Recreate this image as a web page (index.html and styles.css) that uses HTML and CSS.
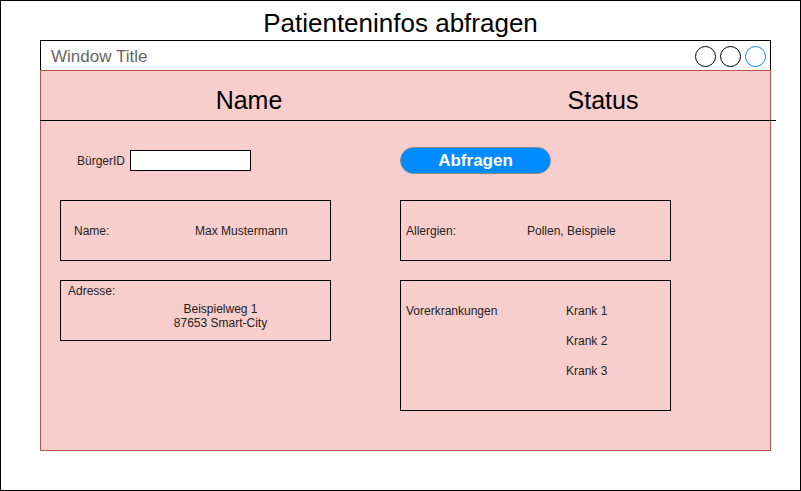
FILE: index.html
```html
<!DOCTYPE html>
<html lang="de">
<head>
<meta charset="utf-8">
<title>Patienteninfos abfragen</title>
<link rel="stylesheet" href="styles.css">
</head>
<body>
<div class="frame">
  <div class="page-title">Patienteninfos abfragen</div>
  <div class="window">
    <div class="titlebar">
      <span class="win-title">Window Title</span>
      <div class="win-controls">
        <span class="ctrl"></span>
        <span class="ctrl"></span>
        <span class="ctrl ctrl-blue"></span>
      </div>
    </div>
    <div class="win-body">
      <div class="col-heads">
        <div class="col-head">Name</div>
        <div class="col-head">Status</div>
      </div>
      <div class="divider"></div>
      <div class="content">
        <div class="search">
          <label class="search-label" for="bid">BürgerID</label>
          <input id="bid" class="search-input" type="text">
        </div>
        <div class="action">
          <button class="btn" type="button">Abfragen</button>
        </div>
        <div class="box box-name">
          <span class="lbl lbl-name">Name:</span>
          <span class="val">Max Mustermann</span>
        </div>
        <div class="box box-allergy">
          <span class="lbl lbl-allergy">Allergien:</span>
          <span class="val">Pollen, Beispiele</span>
        </div>
        <div class="box box-address">
          <div class="addr-label">Adresse:</div>
          <div class="addr">
            <div>Beispielweg 1</div>
            <div>87653 Smart-City</div>
          </div>
        </div>
        <div class="box box-history">
          <span class="hist-label">Vorerkrankungen</span>
          <div class="hist-list">
            <span>Krank 1</span>
            <span>Krank 2</span>
            <span>Krank 3</span>
          </div>
        </div>
      </div>
    </div>
  </div>
</div>
</body>
</html>
```

FILE: styles.css
```css
* {
  box-sizing: border-box;
}

html, body {
  margin: 0;
  padding: 0;
  background: #fff;
}

body {
  font-family: "Liberation Sans", Arial, Helvetica, sans-serif;
  color: #222;
}

.frame {
  width: 801px;
  height: 491px;
  border: 1px solid #000;
  overflow: hidden;
}

.page-title {
  height: 39px;
  padding-top: 7px;
  font-size: 26px;
  line-height: 30px;
  text-align: center;
  color: #000;
}

.window {
  margin-left: 39px;
  width: 731px;
}

.titlebar {
  height: 30px;
  border: 1px solid #000;
  border-bottom: none;
  display: flex;
  align-items: center;
  justify-content: space-between;
  padding: 0 4px 0 10px;
  background: #fff;
}

.win-title {
  align-self: flex-start;
  margin-top: 6px;
  font-size: 17px;
  line-height: 19px;
  color: #666;
}

.win-controls {
  display: flex;
  gap: 4px;
  margin-top: 1px;
}

.ctrl {
  width: 21px;
  height: 21px;
  border: 1px solid #000;
  border-radius: 50%;
  background: #fff;
}

.ctrl-blue {
  border-color: #008cff;
}

.win-body {
  height: 381px;
  border: 1px solid #b85450;
  background: #f8cecc;
}

.col-heads {
  display: grid;
  grid-template-columns: 416px 292px;
  height: 49px;
  padding-top: 15px;
}

.col-head {
  font-size: 25px;
  line-height: 29px;
  text-align: center;
  color: #000;
}

.divider {
  width: 736px;
  height: 1px;
  margin-left: -1px;
  background: #000;
}

.content {
  display: grid;
  grid-template-columns: 271px 271px;
  column-gap: 69px;
  row-gap: 19px;
  align-items: start;
  padding: 26px 0 0 19px;
  font-size: 12px;
}

.search {
  display: flex;
  align-items: center;
  gap: 5px;
  height: 27px;
  margin-bottom: 7px;
  padding-left: 17px;
}

.search-label {
  line-height: 14px;
}

.search-input {
  width: 121px;
  height: 21px;
  margin: 0;
  padding: 0 3px;
  border: 1px solid #000;
  border-radius: 0;
  background: #fff;
  font: inherit;
}

.action {
  height: 27px;
  margin-bottom: 7px;
}

.btn {
  width: 151px;
  height: 27px;
  margin: 0;
  padding: 0;
  border: 1px solid #8a8a8a;
  border-radius: 14px;
  background: #008cff;
  color: #fff;
  font-family: "Liberation Sans", Arial, Helvetica, sans-serif;
  font-size: 17px;
  font-weight: bold;
  line-height: 20px;
}

.box {
  border: 1px solid #000;
  line-height: 14px;
}

.box-name,
.box-allergy {
  height: 61px;
  display: flex;
  align-items: center;
}

.box-name {
  padding-left: 13px;
}

.box-allergy {
  padding-left: 5px;
}

.lbl {
  width: 121px;
  flex: none;
}

.box-address {
  height: 61px;
  padding-top: 3px;
}

.addr-label {
  padding-left: 7px;
}

.addr {
  margin-top: 4px;
  padding-left: 50px;
  text-align: center;
}

.box-history {
  height: 131px;
  display: flex;
  align-items: flex-start;
  padding: 23px 0 0 5px;
}

.hist-label {
  width: 160px;
  flex: none;
}

.hist-list {
  display: flex;
  flex-direction: column;
  gap: 16px;
}
```
